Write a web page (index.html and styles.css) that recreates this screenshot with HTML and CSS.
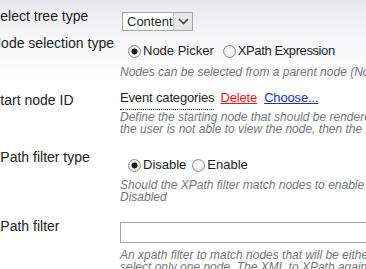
FILE: index.html
```html
<!DOCTYPE html>
<html>
<head>
<meta charset="utf-8">
<link rel="stylesheet" href="styles.css">
</head>
<body>
<div class="form">
  <div class="row row1">
    <div class="label">Select tree type</div>
    <div class="value">
      <div class="select"><span class="select-text">Content</span><span class="select-btn"><svg width="11" height="7" viewBox="0 0 11 7"><path d="M1 1 L5.5 5.5 L10 1" fill="none" stroke="#444" stroke-width="1.6"/></svg></span></div>
    </div>
  </div>
  <div class="row row2">
    <div class="label">Node selection type</div>
    <div class="value">
      <div class="radios">
        <label class="opt"><input type="radio" name="sel" checked><span>Node Picker</span></label>
        <label class="opt"><input type="radio" name="sel"><span class="tight">XPath Expression</span></label>
      </div>
      <div class="desc d2">Nodes can be selected from a parent node (Node Picker) or by using an XPath expression</div>
    </div>
  </div>
  <div class="row row3">
    <div class="label">Start node ID</div>
    <div class="value">
      <div class="picker"><span class="node">Event categories</span><a class="del" href="#">Delete</a><a class="choose" href="#">Choose...</a></div>
      <div class="desc d3">Define the starting node that should be rendered for the picker. If<br>the user is not able to view the node, then the tree will be empty</div>
    </div>
  </div>
  <div class="row row4">
    <div class="label">XPath filter type</div>
    <div class="value">
      <div class="radios">
        <label class="opt"><input type="radio" name="flt" checked><span>Disable</span></label>
        <label class="opt"><input type="radio" name="flt"><span>Enable</span></label>
      </div>
      <div class="desc d4">Should the XPath filter match nodes to enable or disable them? Default is<br>Disabled</div>
    </div>
  </div>
  <div class="row row5">
    <div class="label">XPath filter</div>
    <div class="value">
      <input class="text" type="text">
      <div class="desc d5">An xpath filter to match nodes that will be either enabled or disabled to<br>select only one node. The XML to XPath against is the same as the</div>
    </div>
  </div>
</div>
</body>
</html>
```
FILE: styles.css
```css
html, body {
  margin: 0;
  padding: 0;
  height: 100%;
  overflow: hidden;
}
body {
  background: linear-gradient(to bottom, #e9e9ed 0px, #f7f7f9 40px, #ffffff 90px);
  font-family: "Liberation Sans", Arial, sans-serif;
  font-size: 13px;
  color: #1e1e1e;
}
.form {
  margin-left: -9px;
  padding-top: 8px;
  white-space: nowrap;
}
.row {
  display: grid;
  grid-template-columns: 129px 1fr;
}
.label {
  font-size: 14px;
  line-height: 16px;
  color: #222;
}
.value {
  line-height: 16px;
  min-width: 0;
}
.row1 .value { padding-top: 4px; }
.row2 { margin-top: 4px; }
.row2 .value { padding-top: 8px; }
.row3 { margin-top: 12px; }
.row3 .label { padding-top: 2px; }
.row4 { margin-top: 14px; }
.row4 .value { padding-top: 8px; }
.row5 { margin-top: 15px; }
.row5 .value { padding-top: 4px; }

.select {
  display: inline-flex;
  width: 71px;
  height: 19px;
  box-sizing: border-box;
  border: 1px solid #a7a7a7;
  background: #fff;
  margin-left: 2px;
}
.select-text {
  flex: 1;
  padding-left: 4px;
  line-height: 17px;
  color: #2a2a2a;
}
.select-btn {
  width: 18px;
  background: #e6e6e6;
  border-left: 1px solid #c4c4c4;
  display: flex;
  align-items: center;
  justify-content: center;
}
.radios {
  display: flex;
  align-items: center;
  height: 16px;
}
.opt {
  display: flex;
  align-items: center;
}
.opt input {
  appearance: none;
  -webkit-appearance: none;
  width: 13px;
  height: 13px;
  margin: 0 2px 0 8px;
  border: 1px solid #8e8f8f;
  border-radius: 50%;
  box-sizing: border-box;
  background: radial-gradient(circle at 50% 40%, #ffffff 0, #f2f2f2 45%, #d6d6d6 100%);
}
.opt input:checked {
  background: radial-gradient(circle, #111 0, #111 2.6px, #f4f4f4 3.4px, #e2e2e2 100%);
}
.tight { letter-spacing: -0.4px; }
.row2 .opt + .opt input { margin-left: 9px; }
.row4 .opt + .opt input { margin-left: 6px; }
.desc {
  font-style: italic;
  font-size: 12px;
  line-height: 12px;
  color: #76767c;
}
.d2 { margin-top: 7px; }
.d3 { margin-top: 1px; }
.d4 { margin-top: 6px; }
.d5 { margin-top: 6px; }
.picker {
  height: 20px;
  letter-spacing: -0.15px;
}
.node {
  display: inline-block;
  padding-bottom: 3px;
  border-bottom: 1px dotted #333;
  line-height: 16px;
}
.del {
  color: #ff1010;
  margin-left: 6px;
}
.choose {
  color: #2233aa;
  margin-left: 7px;
}
.text {
  display: block;
  width: 300px;
  height: 21px;
  box-sizing: border-box;
  margin: 0;
  border: 1px solid #a5a5a5;
  background: #fff;
}
```
